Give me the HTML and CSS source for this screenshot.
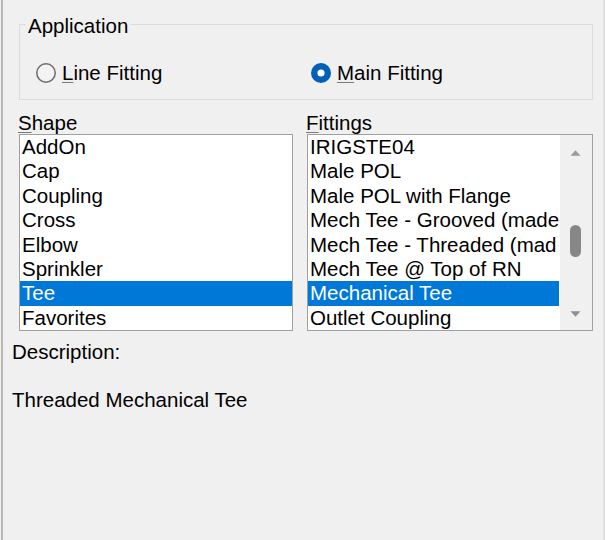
FILE: index.html
```html
<!DOCTYPE html>
<html lang="en">
<head>
  <meta charset="UTF-8">
  <title>Fitting Selection</title>
  <link rel="stylesheet" href="styles.css">
</head>
<body>

  <div class="dialog">
    <!-- Application group box -->
    <div class="group">
      <span class="group-title">Application</span>
      <div class="radio-row">
        <label class="radio">
          <svg width="20" height="20" viewBox="0 0 20 20">
            <circle cx="10" cy="10" r="9.2" fill="#f3f3f3" stroke="#6b6b6b" stroke-width="1.5"/>
          </svg>
          <span><u>L</u>ine Fitting</span>
        </label>
        <label class="radio">
          <svg width="20" height="20" viewBox="0 0 20 20">
            <circle cx="10" cy="10" r="10" fill="#005fb8"/>
            <circle cx="10" cy="10" r="3.6" fill="#ffffff"/>
          </svg>
          <span><u>M</u>ain Fitting</span>
        </label>
      </div>
    </div>

    <!-- Shape and fitting lists -->
    <div class="lists">
      <div class="list-col">
        <div class="list-label"><u>S</u>hape</div>
        <div class="listbox">
          <div class="items">
            <div class="item">AddOn</div>
            <div class="item">Cap</div>
            <div class="item">Coupling</div>
            <div class="item">Cross</div>
            <div class="item">Elbow</div>
            <div class="item">Sprinkler</div>
            <div class="item selected">Tee</div>
            <div class="item">Favorites</div>
          </div>
        </div>
      </div>

      <div class="list-col">
        <div class="list-label"><u>F</u>ittings</div>
        <div class="listbox">
          <div class="items">
            <div class="item">IRIGSTE04</div>
            <div class="item">Male POL</div>
            <div class="item">Male POL with Flange</div>
            <div class="item">Mech Tee - Grooved (made</div>
            <div class="item">Mech Tee - Threaded (mad</div>
            <div class="item">Mech Tee @ Top of RN</div>
            <div class="item selected">Mechanical Tee</div>
            <div class="item">Outlet Coupling</div>
          </div>
          <!-- vertical scrollbar -->
          <div class="scrollbar">
            <div class="arrow up">
              <svg width="11" height="6" viewBox="0 0 11 6"><polygon points="0.5,5.8 5.5,0.3 10.5,5.8" fill="#9a9a9a"/></svg>
            </div>
            <div class="track">
              <div class="thumb"></div>
            </div>
            <div class="arrow down">
              <svg width="11" height="6" viewBox="0 0 11 6"><polygon points="0.5,0.2 5.5,5.7 10.5,0.2" fill="#8f8f8f"/></svg>
            </div>
          </div>
        </div>
      </div>
    </div>

    <!-- Description of the selected fitting -->
    <div class="description">
      <p>Description:</p>
      <p class="desc-text">Threaded Mechanical Tee</p>
    </div>
  </div>

</body>
</html>
```

FILE: styles.css
```css
html, body {
  margin: 0;
  padding: 0;
  background-color: #f0f0f0;
  font-family: "Liberation Sans", Arial, sans-serif;
  font-size: 20.5px;
  color: #000;
}

/* Dialog window, left and right frame edges */
.dialog {
  height: 540px;
  box-sizing: border-box;
  margin-left: 1px;
  border-left: 2px solid #b9b9b9;
  border-right: 2px solid #e0e0e0;
  padding: 24px 10px 0 16px;
}

u {
  text-decoration: underline;
  text-decoration-color: #7a7a7a;
  text-decoration-thickness: 1px;
  text-underline-offset: 2px;
}

/* Group box with its caption sitting on the top border */
.group {
  position: relative;
  height: 76px;
  box-sizing: border-box;
  border: 1px solid #dcdcdc;
}

.group-title {
  position: absolute;
  top: -11px;
  left: 6px;
  padding: 0 2px;
  line-height: 23px;
  background-color: #f0f0f0;
}

.radio-row {
  display: grid;
  grid-template-columns: 275px 1fr;
  padding: 36px 0 0 16px;
}

.radio {
  display: flex;
  align-items: center;
  gap: 6px;
  line-height: 23px;
}

.radio svg {
  flex: none;
}

/* Two list boxes side by side */
.lists {
  display: grid;
  grid-template-columns: 274px 286px;
  gap: 14px;
  margin-top: 11px;
}

.list-label {
  line-height: 23px;
  margin-left: -1px;
}

.listbox {
  display: flex;
  height: 197px;
  box-sizing: border-box;
  border: 1px solid #a0a0a0;
  background-color: #fff;
}

.items {
  flex: 1;
  min-width: 0;
  overflow: hidden;
}

.item {
  height: 24.375px;
  line-height: 24.375px;
  padding-left: 2px;
  white-space: nowrap;
  overflow: hidden;
}

.item.selected {
  background-color: #0078d7;
  color: #fff;
}

/* Scrollbar on the fittings list */
.scrollbar {
  width: 32px;
  flex: none;
  display: flex;
  flex-direction: column;
  background-color: #f0f0f0;
  margin-left: 1px;
}

.arrow {
  display: flex;
  justify-content: center;
  align-items: center;
  padding-right: 1px;
}

.arrow.up {
  height: 35px;
}

.arrow.down {
  height: 32px;
}

.track {
  flex: 1;
  display: flex;
  justify-content: center;
  padding-right: 1px;
}

.thumb {
  width: 11px;
  height: 32px;
  margin-top: 55px;
  border-radius: 6px;
  background-color: #878787;
}

/* Description text under the lists */
.description {
  margin: 9px 0 0 -7px;
}

.description p {
  margin: 0;
  line-height: 24px;
}

.description .desc-text {
  margin-top: 24px;
}
```
